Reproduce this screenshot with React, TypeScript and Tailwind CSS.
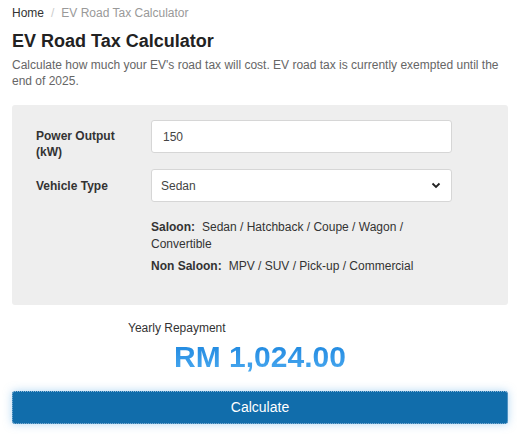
import React, { useState } from 'react';

const App: React.FC = () => {
    const [power, setPower] = useState('150');
    const [type, setType] = useState('Sedan');

    return (
        <div className="min-h-screen bg-white pl-3 pr-[9px] pt-[5px] text-[#333] font-['Liberation_Sans',Arial,sans-serif]">
            {/* Breadcrumb */}
            <nav className="flex items-center text-[12px] leading-[16px]">
                <span className="text-[#333]">Home</span>
                <span className="mx-[7px] text-[#ccc]">/</span>
                <span className="text-[#999]">EV Road Tax Calculator</span>
            </nav>

            <h1 className="mt-[9px] text-[18px] leading-[22px] font-bold text-[#222]">EV Road Tax Calculator</h1>
            <p className="mt-[5px] text-[12px] leading-[16px] text-[#666]">
                Calculate how much your EV's road tax will cost. EV road tax is currently exempted until the end of 2025.
            </p>

            {/* Form panel */}
            <div className="mt-[16px] rounded-[3px] bg-[#eeeeee] pl-6 pr-[56px] pt-[15px] pb-[30px]">
                <div className="flex items-start">
                    <label className="w-[115px] pt-[8px] text-[12px] leading-[16px] font-bold text-[#333]">
                        Power Output<br />(kW)
                    </label>
                    <input
                        value={power}
                        onChange={(e) => setPower(e.target.value)}
                        className="h-[33px] flex-1 rounded-[3px] border border-[#d6d6d6] bg-white px-[11px] text-[12px] text-[#444] outline-none"
                    />
                </div>

                <div className="mt-[9px] flex items-center">
                    <label className="w-[115px] text-[12px] leading-[16px] font-bold text-[#333]">Vehicle Type</label>
                    <div className="relative flex-1">
                        <select
                            value={type}
                            onChange={(e) => setType(e.target.value)}
                            className="h-[33px] w-full appearance-none rounded-[3px] border border-[#d6d6d6] bg-white px-[9px] text-[12px] text-[#444] outline-none"
                        >
                            <option>Sedan</option>
                            <option>Hatchback</option>
                            <option>MPV</option>
                            <option>SUV</option>
                        </select>
                        <svg className="pointer-events-none absolute right-[11px] top-[13px]" width="10" height="7" viewBox="0 0 10 7">
                            <path d="M1.5 1.5 L5 5 L8.5 1.5" fill="none" stroke="#222" strokeWidth="1.8" />
                        </svg>
                    </div>
                </div>

                <div className="mt-[17px] ml-[115px] text-[12px] leading-[17px] text-[#333]">
                    <p>
                        <b className="mr-[7px]">Saloon:</b>Sedan / Hatchback / Coupe / Wagon / Convertible
                    </p>
                    <p className="mt-[5px]">
                        <b className="mr-[7px]">Non Saloon:</b>MPV / SUV / Pick-up / Commercial
                    </p>
                </div>
            </div>

            {/* Result */}
            <div className="mt-[15px] pl-[116px] text-[12px] leading-[16px] text-[#333]">Yearly Repayment</div>
            <div className="mt-[3px] text-center">
                <span className="bg-gradient-to-b from-[#1684de] to-[#4aaaf0] bg-clip-text text-[30px] leading-[36px] font-bold text-transparent">
                    RM 1,024.00
                </span>
            </div>

            <button className="mt-[16px] h-[33px] w-full rounded-[3px] border border-dotted border-[#8fb8d8] bg-[#116dab] text-[14px] text-white shadow-[0_0_8px_rgba(102,175,233,0.5)]">
                Calculate
            </button>
        </div>
    );
};

export default App;
